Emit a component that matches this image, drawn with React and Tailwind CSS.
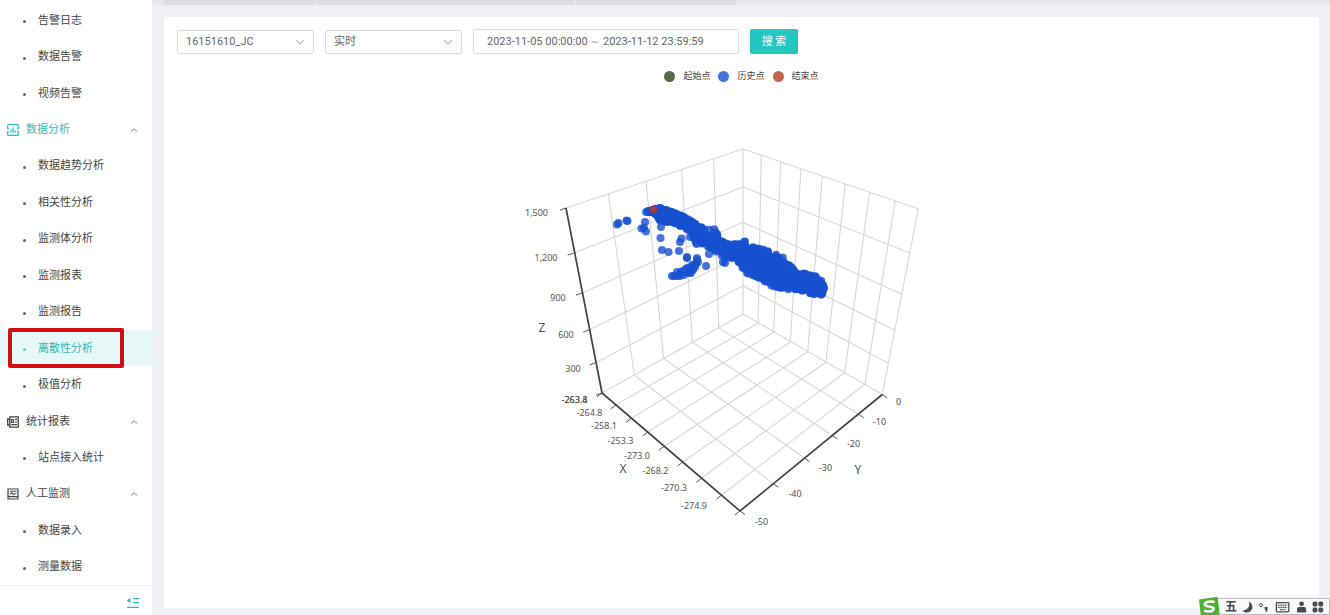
import React from "react";

const TEXT_FONT = "font-['Roboto','Noto_Sans_CJK_SC',sans-serif]";

function AnalysisIcon() {
  return (
    <svg width="12" height="12" viewBox="0 0 12 12" fill="none" stroke="currentColor" strokeWidth="1.1" aria-hidden="true">
      <path d="M0.6 4V1.6Q0.6 0.6 1.6 0.6H10.4Q11.4 0.6 11.4 1.6V4M11.4 8V10.4Q11.4 11.4 10.4 11.4H1.6Q0.6 11.4 0.6 10.4V8M0 4.4H2M10 4.4H12M0 7.6H2M10 7.6H12" />
      <path d="M4 8.8V5.6M6 8.8V3.6M8 8.8V6.2" strokeWidth="1.2" />
    </svg>
  );
}

function ReportIcon() {
  return (
    <svg width="12" height="12" viewBox="0 0 12 12" fill="none" stroke="currentColor" strokeWidth="1.3" aria-hidden="true">
      <path d="M2.8 0.8H11.2V11.2H2.8ZM2.8 3H0.7V9H2.8" />
      <path d="M4.4 3.6H6.6V6.4H4.4ZM8 3.4H10M8 6H10M4.2 8.6H10" strokeWidth="1.1" />
    </svg>
  );
}

function ManualIcon() {
  return (
    <svg width="12" height="12" viewBox="0 0 12 12" fill="none" stroke="currentColor" strokeWidth="1.2" aria-hidden="true">
      <path d="M1 1H11V11H1Z" />
      <path d="M3 3.2H9.4M3 6.2L5 4.9L6.6 6.6L9.4 4.9M1 8.6H11" strokeWidth="1.1" />
    </svg>
  );
}

function Chevron({ up }) {
  return (
    <svg width="8" height="8" viewBox="0 0 8 8" fill="none" stroke="currentColor" strokeWidth="1" aria-hidden="true">
      <path d={up ? "M0.8 5.6L4 2.8L7.2 5.6" : "M0.4 2L4 6.2L7.6 2"} />
    </svg>
  );
}

const MENU = [
  { label: "告警日志" },
  { label: "数据告警" },
  { label: "视频告警" },
  { label: "数据分析", Icon: AnalysisIcon, open: true },
  { label: "数据趋势分析" },
  { label: "相关性分析" },
  { label: "监测体分析" },
  { label: "监测报表" },
  { label: "监测报告" },
  { label: "离散性分析", active: true },
  { label: "极值分析" },
  { label: "统计报表", Icon: ReportIcon },
  { label: "站点接入统计" },
  { label: "人工监测", Icon: ManualIcon },
  { label: "数据录入" },
  { label: "测量数据" },
];

function MenuRow({ item }) {
  const { label, Icon, open, active } = item;
  if (Icon) {
    return (
      <li className="flex min-h-7 flex-1">
        <button
          type="button"
          aria-expanded="true"
          className={`flex w-full items-center pl-[7px] pr-3.5 pt-px ${open ? "text-[#35bdbd]" : "text-[#444]"}`}
        >
          <Icon />
          <span className="ml-[7px] flex-1 text-left">{label}</span>
          <span className="text-[#888]">
            <Chevron up />
          </span>
        </button>
      </li>
    );
  }
  return (
    <li className="relative flex min-h-7 flex-1">
      <a
        href="#"
        aria-current={active ? "page" : undefined}
        className={`flex w-full items-center pl-[23px] pt-px ${active ? "bg-[#e6f9f8] text-[#35b5b0]" : "text-[#444]"}`}
      >
        <span className={`mt-0.5 size-[3px] rounded-full ${active ? "bg-[#5cc8c4]" : "bg-[#666]"}`} />
        <span className="ml-3">{label}</span>
      </a>
      {active && <span className="pointer-events-none absolute -inset-y-0.5 left-2 w-[116px] rounded-xs border-4 border-[#d40f14]" />}
    </li>
  );
}

function Sidebar() {
  return (
    <aside className="flex w-[152px] shrink-0 flex-col bg-white text-[11px] leading-4">
      <nav className="flex flex-1 flex-col pt-0.5">
        <ul className="flex flex-1 flex-col">
          {MENU.map((item) => (
            <MenuRow key={item.label} item={item} />
          ))}
        </ul>
      </nav>
      <div className="flex h-[30px] items-center justify-end border-t border-[#eee] pr-3 pt-1">
        <button type="button" aria-label="收起菜单" className="text-[#2bbcc0]">
          <svg width="14" height="12" viewBox="0 0 14 12" fill="none" stroke="currentColor" strokeWidth="1.3">
            <path d="M7 1.6H13M7 5.6H13M1 10.4H13" />
            <path d="M4.4 0.8V6.4L0.8 3.6Z" fill="currentColor" stroke="none" />
          </svg>
        </button>
      </div>
    </aside>
  );
}

function SelectBox({ label, value }) {
  return (
    <div className="relative w-[137px]">
      <select
        aria-label={label}
        defaultValue={value}
        className="block h-6 w-full appearance-none rounded-xs border border-[#d9d9d9] bg-white pl-2 text-[11px] leading-4 text-[#666]"
      >
        <option>{value}</option>
      </select>
      <span className="pointer-events-none absolute right-2.5 top-2 text-[#999]">
        <Chevron />
      </span>
    </div>
  );
}

function Filters() {
  return (
    <form className="flex flex-wrap items-center gap-[11px] pl-[13px] pt-3" onSubmit={(e) => e.preventDefault()}>
      <SelectBox label="测点" value="16151610_JC" />
      <SelectBox label="类型" value="实时" />
      <div className="flex h-[25px] w-[266px] items-center rounded-xs border border-[#d9d9d9] pl-[13px] text-[11px] leading-4 text-[#666]">
        <input aria-label="开始时间" defaultValue="2023-11-05 00:00:00" className="w-[104px] bg-transparent" />
        <span className="w-3 text-[#999]">~</span>
        <input aria-label="结束时间" defaultValue="2023-11-12 23:59:59" className="w-[104px] bg-transparent" />
      </div>
      <button type="submit" className="h-[25px] w-12 rounded-xs bg-[#23c6c1] text-[11px] leading-4 text-white">
        搜 索
      </button>
    </form>
  );
}

function Legend() {
  return (
    <ul className="mt-3.5 flex items-center justify-center gap-2 text-[9px] leading-4 text-[#444]">
      <li className="flex items-center gap-2">
        <span className="size-[11px] rounded-full bg-[#566949]" />
        起始点
      </li>
      <li className="flex items-center gap-2">
        <span className="size-[11px] rounded-full bg-[#4573d6]" />
        历史点
      </li>
      <li className="flex items-center gap-2">
        <span className="size-[11px] rounded-full bg-[#c4634b]" />
        结束点
      </li>
    </ul>
  );
}

// Projected positions of the box edges, one entry for each axis division.
const leftTop = [[566, 208], [608.3, 193.3], [646, 180.5], [681.5, 169], [713.7, 159], [743, 149]];
const leftBottom = [[602, 393], [634.3, 375], [663.7, 358.5], [692.3, 342], [718.7, 328], [743, 314]];
const rightTop = [[743, 149], [761.3, 155], [780.7, 161.5], [801, 169], [822.3, 176], [845.3, 184], [869.7, 192], [895.3, 200.7], [918.3, 208.7]];
const rightBottom = [[743, 314], [758, 323.3], [773.7, 332.3], [790.3, 342.3], [807.7, 351.7], [826, 362.3], [844.7, 372.7], [865, 384.3], [882.3, 394.5]];
const zLeft = [[566, 208], [573.7, 253], [582, 293], [589.3, 329.7], [595.7, 362.7], [602, 393]];
const zMid = [[743, 149], [743, 187], [743, 222.3], [743, 255], [743, 285.8], [743, 314]];
const zRight = [[918.3, 208.7], [909.3, 252.7], [902, 294.3], [894.5, 330], [888, 363], [882.3, 394.5]];
const xAxis = [[602, 393], [615.7, 405], [631.3, 418.3], [647.7, 432], [664, 446.3], [682.7, 462], [701.3, 478.3], [721.7, 495], [740, 511]];
const yAxis = [[740, 511], [773.3, 483.7], [804.7, 458.3], [832.3, 435.5], [858.7, 414.3], [882.3, 394.5]];

const seg = (a, b) => `M${a[0]} ${a[1]}L${b[0]} ${b[1]}`;
const join = (from, to) => from.map((p, i) => seg(p, to[i])).join("");
const ticks = (pts, dx, dy) => pts.map((p) => seg(p, [p[0] + dx, p[1] + dy])).join("");

const GRID =
  join(leftTop, leftBottom) + join(rightTop, rightBottom) + join(zLeft, zMid) + join(zMid, zRight) + join(xAxis, rightBottom) + join(yAxis, leftBottom);

const LABELS = [
  ["1,500", 536.5, 212.5], ["1,200", 546, 257.5], ["900", 558, 298], ["600", 566, 335], ["300", 573, 368.5],
  ["-263.8", 574.5, 399.5], ["-263.4", 574.5, 399.5], ["-264.8", 589.5, 412.5], ["-258.1", 604, 426], ["-253.3", 620.5, 440.5],
  ["-273.0", 637, 455.5], ["-268.2", 655.5, 471], ["-270.3", 674, 488], ["-274.9", 694, 506],
  ["0", 898.5, 401.5], ["-10", 879.5, 421.5], ["-20", 853.5, 443.5], ["-30", 825.5, 467.5], ["-40", 795, 493.5], ["-50", 761.5, 522],
];

// Cloud outline: x, lowest and highest centre of the points there.
const BAND = [
  [649, 211, 212], [655, 209, 213], [660, 208, 221], [667, 210, 222], [675, 213, 223], [682, 216, 227], [690, 220, 231],
  [697, 225, 245], [706, 230, 246], [715, 229, 251], [721, 241, 257], [728, 244, 258], [736, 244, 258], [743, 244, 269],
  [747, 246, 274], [757, 248, 277], [765, 250, 282], [775, 253, 288], [784, 258, 289], [790, 265, 290], [797, 274, 290],
  [806, 273, 292], [815, 276, 295], [821, 280, 295], [824, 285, 293],
];

function buildCloud() {
  let s = 7;
  const rnd = () => {
    s = (s * 16807) % 2147483647;
    return s / 2147483647;
  };
  const out = [];
  for (let i = 0; i < BAND.length - 1; i++) {
    const [x0, a0, b0] = BAND[i];
    const [x1, a1, b1] = BAND[i + 1];
    const sparse = x0 >= 695 && x0 < 718;
    const n = Math.round((x1 - x0) * (sparse ? 3 : 7));
    for (let k = 0; k < n; k++) {
      const t = rnd();
      const lo = a0 + (a1 - a0) * t;
      const hi = b0 + (b1 - b0) * t;
      out.push([Math.round((x0 + (x1 - x0) * t) * 10) / 10, Math.round((lo + (hi - lo) * rnd()) * 10) / 10]);
    }
  }
  return out;
}

const POINTS = [
  ...buildCloud(),
  [617, 224.5], [618.5, 223], [626.5, 220.5], [627.5, 221], [645, 222], [641.5, 228.5], [644, 228], [646, 231.5], [661, 227], [660.5, 238], [662, 250],
  [668.5, 252], [681.5, 238.5], [680, 242], [679, 251], [690, 237], [687, 257], [687, 258], [706, 266], [709, 254], [725, 263], [723, 262], [745, 241.5], [744, 242],
  [672, 276], [674, 276], [677, 276], [677, 272], [680, 274], [683, 271], [684, 275], [686, 272], [688, 270], [690, 268], [691, 273], [692, 268], [694, 265],
  [681, 272], [686, 269], [689, 273], [692, 265], [693, 270], [697, 258],
  [695, 267], [697, 260], [698, 262], [696, 264], [680, 276], [687, 268], [646, 212], [648, 211], [648, 212], [790, 266], [804, 274],
];

function ScatterChart() {
  return (
    <svg className="mx-auto block w-[521px] max-w-full font-['Noto_Sans',sans-serif]" viewBox="481 84 521 457" role="img" aria-label="离散性分析">
      <path d={GRID} fill="none" stroke="#d6d6d6" strokeWidth="1.1" />
      <path d={ticks(zLeft, -6, 2.2) + ticks(xAxis, -5, 4) + ticks(yAxis, 5, 3.5)} fill="none" stroke="#555" strokeWidth="1" />
      <path d="M566 208L602 393L740 511L882.3 394.5" fill="none" stroke="#444" strokeWidth="1.7" />
      <g fill="#1650d0" fillOpacity="0.8">
        {POINTS.map(([x, y], i) => (
          <circle key={i} cx={x} cy={y} r="4" />
        ))}
      </g>
      <circle cx="653.5" cy="209.5" r="3.6" fill="#c23531" fillOpacity="0.85" />
      <g fontSize="9" fill="#555" textAnchor="middle">
        {LABELS.map(([text, x, y]) => (
          <text key={text} x={x} y={y + 3}>
            {text}
          </text>
        ))}
      </g>
      <g fontSize="12" fill="#555" textAnchor="middle">
        <text x="542" y="332">Z</text>
        <text x="623" y="473">X</text>
        <text x="858" y="474">Y</text>
      </g>
    </svg>
  );
}

function InputMethodBar() {
  return (
    <div className="fixed bottom-0 right-0 flex h-[17px] w-[122px] items-center border border-[#bbb] bg-[#fafafa] pl-4 text-[#4a4a52]">
      <svg className="absolute -left-[11px] -top-[3px]" width="24" height="22" viewBox="0 0 24 22" aria-hidden="true">
        <path d="M1 3.6L19.6 0.8L21.6 18.6L3 21.6Z" fill="#4bb22e" />
        <path d="M16.6 6C12.4 4.8 7 5.6 6.8 8.4C6.6 11.2 15.6 9.8 15.6 12.8C15.6 15.8 9.6 16 6 14.6" fill="none" stroke="#fff" strokeWidth="2.6" />
      </svg>
      <span className="w-3 shrink-0 text-[12px] font-bold leading-4">五</span>
      <svg className="shrink-0" width="90" height="14" viewBox="0 0 90 14" fill="currentColor" aria-hidden="true">
        <path d="M12 1.6C18 5.6 15.6 13 9.4 12.6C7.8 12.4 6.4 11.6 5.4 10.4C10.6 10.4 13.4 6.6 12 1.6Z" />
        <circle cx="24" cy="5.2" r="1.5" fill="none" stroke="currentColor" />
        <path d="M27.6 7H30.6V9.4Q30.4 11.8 28 12.6Q29 10.8 28.8 9.8H27.6Z" />
        <rect x="39.4" y="2.6" width="12.4" height="9.2" rx="0.8" fill="none" stroke="currentColor" strokeWidth="1.3" />
        <path d="M41.2 5.2H50.2M41.2 7.4H50.2M43 9.6H48.4" stroke="currentColor" strokeWidth="1.2" strokeDasharray="1.5 0.6" />
        <circle cx="64.6" cy="3.8" r="2.4" />
        <path d="M60 12.4V9Q60 7 62 7H67.2Q69.2 7 69.2 9V12.4Z" />
        <g>
          <rect x="75.6" y="1.6" width="4.8" height="4.8" rx="1.6" />
          <rect x="81.4" y="1.6" width="4.8" height="4.8" rx="1.6" />
          <rect x="75.6" y="7.6" width="4.8" height="4.8" rx="1.6" />
          <rect x="81.4" y="7.6" width="4.8" height="4.8" rx="1.6" />
        </g>
      </svg>
    </div>
  );
}

export default function App() {
  return (
    <div className={`flex min-h-screen bg-[#eff0f5] ${TEXT_FONT}`}>
      <Sidebar />
      <div className="flex min-w-0 flex-1 flex-col">
        <div className="flex h-[5px] shrink-0 gap-0.5 bg-[#e6e7ec] pl-3">
          <span className="w-[150px] rounded-b-xs bg-[#dcdde2]" />
          <span className="w-[258px] rounded-b-xs bg-[#dcdde2]" />
          <span className="w-[160px] rounded-b-xs bg-[#dcdde2]" />
        </div>
        <main className="mb-[7px] ml-3 mr-[11px] mt-3 flex-1 bg-white">
          <Filters />
          <Legend />
          <ScatterChart />
        </main>
      </div>
      <InputMethodBar />
    </div>
  );
}
